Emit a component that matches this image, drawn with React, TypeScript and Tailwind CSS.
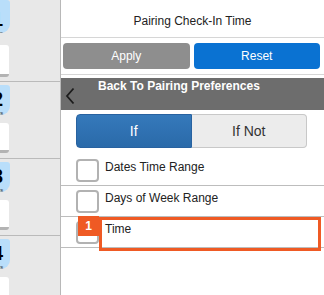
import React from "react";

function Badge({ n, first }: { n: string; first?: boolean }) {
  return (
    <div
      className={`w-[10px] ${first ? "h-[33px]" : "h-[30px]"} bg-[#b9defa] rounded-br-[9px] rounded-tr-[3px] overflow-hidden flex flex-col`}
    >
      <div className={`ml-[-8px] ${first ? "mt-[9px]" : "mt-[4px]"} text-[20px] leading-[20px] font-bold text-black`}>{n}</div>
      <div className="ml-[-5px] mt-[1px] text-[6px] leading-[6px] text-[#333]">hrs</div>
    </div>
  );
}

function Card({ first }: { first?: boolean }) {
  return (
    <div
      className={`w-[9px] ${first ? "h-[32px] mt-[12px]" : "h-[30px] mt-[8px]"} bg-white rounded-r-[3px] border-b-[3px] border-[#b3b3b3]`}
    />
  );
}

export default function App() {
  return (
    <div className="flex w-[324px] h-[295px] overflow-hidden bg-white font-['Liberation_Sans',Arial,sans-serif]">
      {/* left strip */}
      <div className="w-[61px] shrink-0 h-full border-r border-[#b8b8b8] bg-[#e8e8e8] flex flex-col">
        <div className="h-[82px] shrink-0 border-b border-[#bababa]">
          <Badge n="1" first />
          <Card first />
        </div>
        {["2", "3", "4"].map((n) => (
          <div key={n} className="h-[77px] shrink-0 border-b border-[#bababa] pt-[3px]">
            <Badge n={n} />
            <Card />
          </div>
        ))}
      </div>

      {/* right panel */}
      <div className="flex-1 flex flex-col">
        <div className="h-[38px] shrink-0 border-b border-[#d6d6d6] flex items-center justify-center pt-[4px] text-[12px] text-[#222]">
          Pairing Check-In Time
        </div>
        <div className="h-[37px] shrink-0 border-b border-[#d6d6d6] flex gap-[4px] pl-[2px] pr-[4px] pt-[5px]">
          <div className="flex-1 h-[26px] rounded-[4px] bg-[#8e8e8e] text-white text-[12px] flex items-center justify-center">
            Apply
          </div>
          <div className="flex-1 h-[26px] rounded-[4px] bg-[#0a72d2] text-white text-[12px] flex items-center justify-center">
            Reset
          </div>
        </div>
        <div className="mt-[3px] h-[32px] shrink-0 bg-[#6d6d6d] flex items-center">
          <svg className="ml-[4px] mt-[3px] shrink-0" width="10" height="18" viewBox="0 0 10 18">
            <path d="M8.5 1.5 L2 9 L8.5 16.5" fill="none" stroke="#1c1c1c" strokeWidth="1.8" />
          </svg>
          <div className="ml-[23px] self-start text-[12px] leading-[16px] font-bold text-white">
            Back To Pairing Preferences
          </div>
        </div>
        <div className="mt-[4px] ml-[15px] w-[231px] h-[34px] shrink-0 flex">
          <div className="w-1/2 rounded-l-[4px] border border-[#2862a0] bg-gradient-to-b from-[#3579bb] to-[#2a6aa9] text-white text-[14px] flex items-center justify-center">
            If
          </div>
          <div className="w-1/2 rounded-r-[4px] border border-l-0 border-[#c8c8c8] bg-[#ececec] text-[#333] text-[14px] flex items-center justify-center">
            If Not
          </div>
        </div>
        <div className="mt-[7px] flex flex-col">
          {["Dates Time Range", "Days of Week Range", "Time"].map((t, i) => (
            <div
              key={t}
              className="relative h-[31px] shrink-0 border-b border-[#bdbdbd] flex items-start pt-[4px] pl-[15px]"
            >
              <div className="w-[23px] h-[23px] shrink-0 rounded-[4px] border-2 border-[#b2b2b2] bg-white" />
              <div className="ml-[6px] text-[12px] leading-[16px] text-[#222]">{t}</div>
              {i === 2 && (
                <>
                  <div className="absolute left-[38px] top-0 w-[222px] h-[34px] border-[3px] border-[#ef5a24]" />
                  <div className="absolute left-[17px] top-[-1px] w-[21px] h-[20px] bg-[#ef5a24] text-white text-[12px] font-bold flex items-center justify-center">
                    1
                  </div>
                </>
              )}
            </div>
          ))}
        </div>
      </div>
    </div>
  );
}
